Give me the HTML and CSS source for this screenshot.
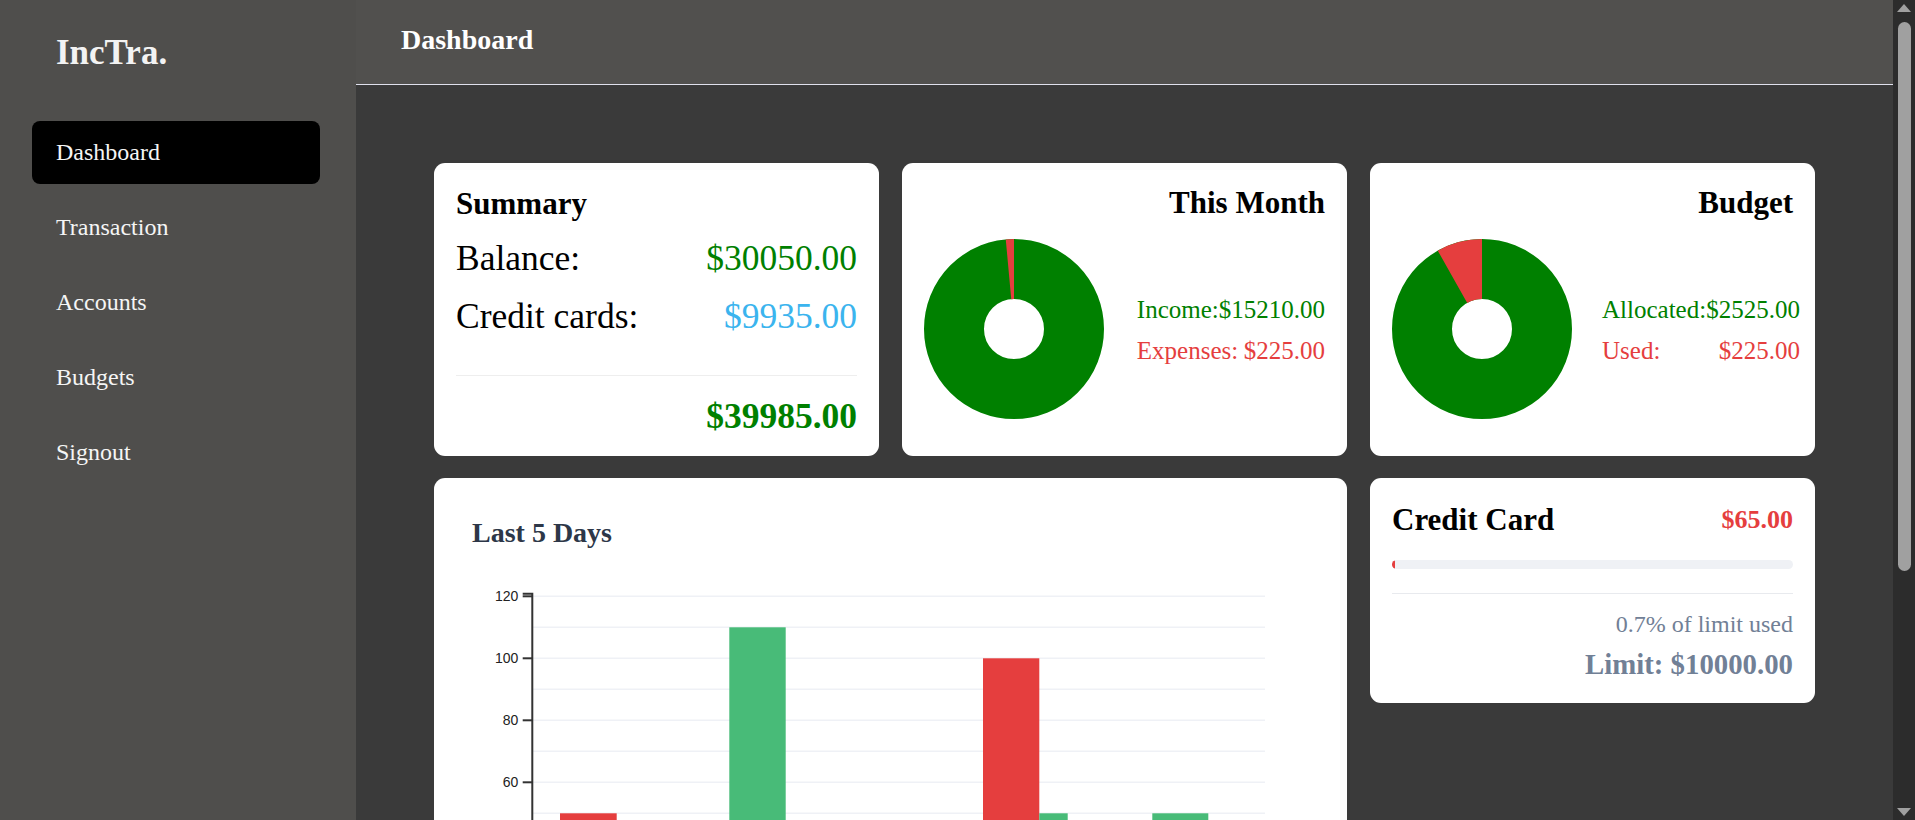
FILE: index.html
```html
<!DOCTYPE html>
<html lang="en">
<head>
<meta charset="utf-8">
<title>IncTra. Dashboard</title>
<link rel="stylesheet" href="styles.css">
</head>
<body>
<div class="app">
  <aside class="sidebar">
    <div class="logo">IncTra.</div>
    <nav class="nav">
      <a class="nav-item active" href="#">Dashboard</a>
      <a class="nav-item" href="#">Transaction</a>
      <a class="nav-item" href="#">Accounts</a>
      <a class="nav-item" href="#">Budgets</a>
      <a class="nav-item" href="#">Signout</a>
    </nav>
  </aside>
  <main class="main">
    <header class="topbar"><h1 class="topbar-title">Dashboard</h1></header>
    <section class="content">
      <div class="grid">
        <div class="card card-summary">
          <h2 class="card-title summary-title">Summary</h2>
          <div class="summary-row"><span>Balance:</span><span class="text-green">$30050.00</span></div>
          <div class="summary-row"><span>Credit cards:</span><span class="text-blue">$9935.00</span></div>
          <div class="divider"></div>
          <div class="summary-total text-green">$39985.00</div>
        </div>

        <div class="card card-pie">
          <h2 class="card-title title-right">This Month</h2>
          <div class="pie-row">
            <div class="donut-wrap">
              <svg class="donut" width="180" height="180" viewBox="0 0 180 180">
                <circle cx="90" cy="90" r="60" fill="none" stroke="#008000" stroke-width="60"/>
                <path d="M81.765 0.378 A90 90 0 0 1 90 0 L90 60 A30 30 0 0 0 87.255 60.126 Z" fill="#e53e3e"/>
              </svg>
            </div>
            <div class="legend">
              <div class="legend-row text-green"><span>Income:</span><span>$15210.00</span></div>
              <div class="legend-row text-red"><span>Expenses:</span><span>$225.00</span></div>
            </div>
          </div>
        </div>

        <div class="card card-pie">
          <h2 class="card-title title-right">Budget</h2>
          <div class="pie-row">
            <div class="donut-wrap">
              <svg class="donut" width="180" height="180" viewBox="0 0 180 180">
                <circle cx="90" cy="90" r="60" fill="none" stroke="#008000" stroke-width="60"/>
                <path d="M45.738 11.636 A90 90 0 0 1 90 0 L90 60 A30 30 0 0 0 75.246 63.879 Z" fill="#e53e3e"/>
              </svg>
            </div>
            <div class="legend">
              <div class="legend-row text-green"><span>Allocated:</span><span>$2525.00</span></div>
              <div class="legend-row text-red"><span>Used:</span><span>$225.00</span></div>
            </div>
          </div>
        </div>

        <div class="card card-chart">
          <h2 class="chart-title">Last 5 Days</h2>
          <svg class="chart" width="837" height="478" viewBox="0 0 837 478">
            <g class="grid-lines" stroke="#eff1f6" stroke-width="1.5">
              <line x1="61" x2="793" y1="24.3" y2="24.3"/>
              <line x1="61" x2="793" y1="55.3" y2="55.3"/>
              <line x1="61" x2="793" y1="86.3" y2="86.3"/>
              <line x1="61" x2="793" y1="117.3" y2="117.3"/>
              <line x1="61" x2="793" y1="148.3" y2="148.3"/>
              <line x1="61" x2="793" y1="179.3" y2="179.3"/>
              <line x1="61" x2="793" y1="210.3" y2="210.3"/>
              <line x1="61" x2="793" y1="241.3" y2="241.3"/>
              <line x1="61" x2="793" y1="272.3" y2="272.3"/>
              <line x1="61" x2="793" y1="303.3" y2="303.3"/>
              <line x1="61" x2="793" y1="334.3" y2="334.3"/>
              <line x1="61" x2="793" y1="365.3" y2="365.3"/>
            </g>
            <g class="bars">
              <rect x="88" y="241.3" width="56.7" height="155" fill="#e53e3e"/>
              <rect x="257.3" y="55.3" width="56.4" height="341" fill="#48bb78"/>
              <rect x="511" y="86.3" width="56.3" height="310" fill="#e53e3e"/>
              <rect x="567.3" y="241.3" width="28.4" height="155" fill="#48bb78"/>
              <rect x="680.3" y="241.3" width="56" height="155" fill="#48bb78"/>
            </g>
            <g class="axis" stroke="#333" stroke-width="2" fill="none">
              <path d="M50.7 21.8 H60.3 V396.3 H50.7"/>
              <line x1="50.7" x2="60.3" y1="24.3" y2="24.3"/>
              <line x1="50.7" x2="60.3" y1="86.3" y2="86.3"/>
              <line x1="50.7" x2="60.3" y1="148.3" y2="148.3"/>
              <line x1="50.7" x2="60.3" y1="210.3" y2="210.3"/>
              <line x1="50.7" x2="60.3" y1="272.3" y2="272.3"/>
              <line x1="50.7" x2="60.3" y1="334.3" y2="334.3"/>
              <line x1="60.3" x2="793" y1="396.3" y2="396.3"/>
            </g>
            <g class="tick-labels">
              <text x="46.4" y="24.3" dy="0.35em">120</text>
              <text x="46.4" y="86.3" dy="0.35em">100</text>
              <text x="46.4" y="148.3" dy="0.35em">80</text>
              <text x="46.4" y="210.3" dy="0.35em">60</text>
              <text x="46.4" y="272.3" dy="0.35em">40</text>
              <text x="46.4" y="334.3" dy="0.35em">20</text>
              <text x="46.4" y="396.3" dy="0.35em">0</text>
            </g>
          </svg>
        </div>

        <div class="card card-credit">
          <div class="credit-head">
            <h2 class="card-title">Credit Card</h2>
            <span class="credit-amount">$65.00</span>
          </div>
          <div class="progress"><div class="progress-fill" style="width:0.7%"></div></div>
          <div class="credit-divider"></div>
          <div class="credit-used">0.7% of limit used</div>
          <div class="credit-limit">Limit: $10000.00</div>
        </div>
      </div>
    </section>
  </main>
  <div class="scrollbar" aria-hidden="true">
    <span class="scroll-arrow scroll-arrow-up"></span>
    <div class="scroll-track"><span class="scroll-thumb"></span></div>
    <span class="scroll-arrow scroll-arrow-down"></span>
  </div>
</div>
</body>
</html>
```

FILE: styles.css
```css
html,
body {
  height: 100%;
}

body {
  margin: 0;
  overflow: hidden;
  font-family: "Liberation Serif", "Times New Roman", serif;
  background: #3a3a3a;
  color: #000;
}

.app {
  display: flex;
  height: 100vh;
}

/* Sidebar */
.sidebar {
  width: 356px;
  flex-shrink: 0;
  box-sizing: border-box;
  background: #4f4e4c;
  padding: 33px 36px 0 32px;
}

.logo {
  font-size: 35px;
  font-weight: bold;
  line-height: 1.15;
  color: #f3f3f3;
  padding-left: 24px;
  margin-bottom: 47.75px;
}

.nav {
  display: flex;
  flex-direction: column;
  gap: 12px;
}

.nav-item {
  height: 63px;
  display: flex;
  align-items: center;
  padding: 0 24px;
  font-size: 24px;
  line-height: 1.15;
  color: #f5f5f5;
  text-decoration: none;
  border-radius: 8px;
}

.nav-item.active {
  background: #000;
}

/* Main */
.main {
  flex: 1;
  min-width: 0;
  overflow-y: auto;
  scrollbar-width: none;
  background: #3a3a3a;
}

.topbar {
  height: 60px;
  padding: 24px 45px 0;
  background: #51504e;
  border-bottom: 1px solid #dfe0ec;
}

.topbar-title {
  margin: 0;
  font-size: 28px;
  line-height: 1.15;
  font-weight: bold;
  color: #fff;
}

.content {
  padding: 78px;
}

.grid {
  display: grid;
  grid-template-columns: repeat(3, 1fr);
  gap: 22px 23px;
}

.card {
  background: #fff;
  border-radius: 11px;
  padding: 22px;
  min-width: 0;
}

.card-title {
  margin: 0;
  font-size: 31px;
  line-height: 1.15;
  font-weight: bold;
}

.title-right {
  text-align: right;
}

.text-green { color: #008000; }
.text-red { color: #e53e3e; }
.text-blue { color: #3bb4ee; }

/* Summary */
.card-summary {
  padding: 23px 22px 19.5px;
}

.summary-title {
  margin-bottom: 16px;
}

.summary-row {
  display: flex;
  justify-content: space-between;
  font-size: 35.5px;
  line-height: 1.15;
}

.summary-row + .summary-row {
  margin-top: 18px;
}

.divider {
  height: 1px;
  background: #eeeeee;
  margin: 38px 0 19.5px;
}

.summary-total {
  text-align: right;
  font-size: 35.5px;
  line-height: 1.15;
  font-weight: bold;
}

/* Pie cards */
.card-pie {
  display: flex;
  flex-direction: column;
}

.pie-row {
  flex: 1;
  display: flex;
  justify-content: space-between;
  align-items: center;
  padding-top: 3px;
}

.donut-wrap {
  width: 210px;
  flex-shrink: 0;
}

.donut {
  display: block;
}

.legend {
  display: flex;
  flex-direction: column;
  gap: 12.45px;
  margin-top: 3.6px;
  font-size: 25px;
  line-height: 1.15;
  flex-shrink: 0;
}

.legend-row {
  display: flex;
  justify-content: space-between;
  white-space: nowrap;
}

/* Chart */
.card-chart {
  grid-column: span 2;
  padding: 39px 38px 37px;
}

.chart-title {
  margin: 0 0 23px;
  font-size: 28px;
  line-height: 1.15;
  font-weight: bold;
  color: #2d3748;
}

.chart {
  display: block;
}

.tick-labels {
  font-family: "Liberation Sans", Arial, sans-serif;
  font-size: 14px;
  fill: #222;
  text-anchor: end;
}

/* Credit card */
.card-credit {
  align-self: start;
  padding: 24px 22px 22px;
}

.credit-head {
  display: flex;
  justify-content: space-between;
  align-items: center;
}

.credit-amount {
  font-size: 26px;
  line-height: 1.15;
  font-weight: bold;
  color: #e53e3e;
}

.progress {
  height: 9px;
  margin-top: 22.4px;
  background: #eff1f5;
  border-radius: 5px;
  overflow: hidden;
}

.progress-fill {
  height: 100%;
  background: #e53e3e;
  border-radius: 5px;
}

.credit-divider {
  height: 1px;
  background: #e8eaee;
  margin: 24px 0 16.5px;
}

.credit-used {
  text-align: right;
  font-size: 24px;
  line-height: 1.15;
  color: #718096;
}

.credit-limit {
  text-align: right;
  margin-top: 10px;
  font-size: 28.8px;
  line-height: 1.15;
  font-weight: bold;
  color: #718096;
}

/* Window scrollbar */
.scrollbar {
  width: 22px;
  flex-shrink: 0;
  display: flex;
  flex-direction: column;
  background: #2c2c2c;
}

.scroll-arrow {
  height: 20px;
  display: flex;
  justify-content: center;
}

.scroll-arrow-up {
  align-items: flex-start;
  padding-top: 4px;
  box-sizing: border-box;
}

.scroll-arrow-down {
  align-items: flex-end;
  padding-bottom: 4px;
  box-sizing: border-box;
}

.scroll-arrow-up::before {
  content: "";
  border-left: 7px solid transparent;
  border-right: 7px solid transparent;
  border-bottom: 8px solid #a0a0a0;
}

.scroll-arrow-down::before {
  content: "";
  border-left: 7px solid transparent;
  border-right: 7px solid transparent;
  border-top: 8px solid #a0a0a0;
}

.scroll-track {
  flex: 1;
  padding: 2px 4px 0 5px;
}

.scroll-thumb {
  display: block;
  height: 549px;
  background: #a0a0a0;
  border-radius: 7px;
}
```
